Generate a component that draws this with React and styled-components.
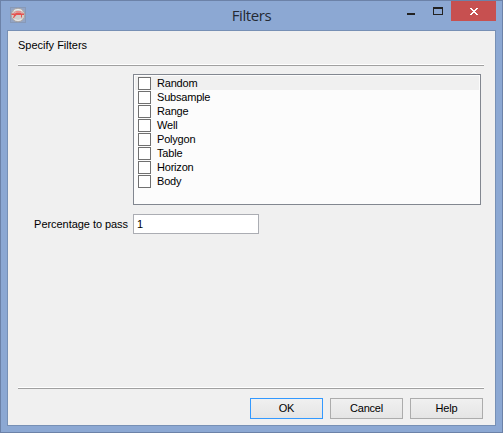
import React from "react";
import styled, { createGlobalStyle } from "styled-components";

const Global = createGlobalStyle`
  * { box-sizing: border-box; }
  body { margin: 0; overflow: hidden; }
`;

const Window = styled.div`
  width: 503px;
  height: 433px;
  display: flex;
  flex-direction: column;
  padding: 0 6px 6px;
  border: 1px solid #6c82a8;
  background: #8ca8d3;
  font: 11px/14px "Liberation Sans", Arial, sans-serif;
  color: #000;
`;

const TitleBar = styled.header`
  height: 29px;
  flex: none;
  display: grid;
  grid-template-columns: 98px 1fr 98px;
  align-items: start;
`;

const AppIcon = styled.svg`
  display: block;
  margin: 6px 0 0 3px;
`;

const Title = styled.h1`
  margin: 3px 0 0;
  text-align: center;
  font: 400 15px/23px "Open Sans", "Noto Sans", sans-serif;
  letter-spacing: -0.4px;
  color: #242a34;
`;

const WindowControls = styled.div`
  display: flex;
  justify-content: flex-end;
`;

const WindowButton = styled.button`
  width: ${(p) => p.$width}px;
  height: 20px;
  flex: none;
  padding: 0;
  border: 0;
  background: ${(p) => (p.$danger ? "#c75050" : "transparent")};

  svg { display: block; }
`;

const Client = styled.main`
  flex: 1;
  display: flex;
  flex-direction: column;
  padding: 7px 12px 6px 10px;
  border: 1px solid #7790b5;
  background: #f0f0f0;
`;

const Heading = styled.h2`
  height: 26px;
  margin: 0;
  font: inherit;
`;

const Divider = styled.div`
  flex: none;
  width: 466px;
  height: 2px;
  border-top: 1px solid #fff;
  border-bottom: 1px solid #a0a0a0;
`;

const FilterList = styled.ul`
  width: 348px;
  height: 131px;
  margin: 8px 0 0 115px;
  padding: 1px;
  list-style: none;
  border: 1px solid #828790;
  background: #fcfcfc;
`;

const FilterRow = styled.li`
  height: 14px;
  background: ${(p) => (p.$active ? "#f0f0f0" : "transparent")};
`;

const FilterLabel = styled.label`
  display: flex;
  height: 14px;
  padding: 1px 0 0 3px;
  gap: 6px;
  line-height: 13px;
  letter-spacing: -0.2px;
`;

const CheckBox = styled.input`
  appearance: none;
  flex: none;
  width: 13px;
  height: 13px;
  margin: 0;
  border: 1px solid #707070;
  background: #fff;
`;

const Field = styled.label`
  display: flex;
  align-items: center;
  gap: 5px;
  margin-top: 9px;
`;

const FieldLabel = styled.span`
  width: 110px;
  text-align: right;
  white-space: nowrap;
  letter-spacing: -0.05px;
`;

const TextInput = styled.input`
  width: 126px;
  height: 20px;
  padding: 0 3px;
  border: 1px solid #abadb3;
  border-radius: 0;
  background: #fff;
  font: inherit;
  color: #000;
  outline: 0;
`;

const Footer = styled.footer`
  margin-top: auto;
`;

const Actions = styled.div`
  display: flex;
  justify-content: flex-end;
  gap: 7px;
  padding-top: 9px;
`;

const ActionButton = styled.button`
  width: 73px;
  height: 21px;
  padding: 0 0 2px;
  border: 1px solid ${(p) => (p.$primary ? "#3399ff" : "#acacac")};
  background: linear-gradient(#f0f0f0, #e5e5e5);
  font: inherit;
  letter-spacing: -0.2px;
  color: #000;
`;

const filters = ["Random", "Subsample", "Range", "Well", "Polygon", "Table", "Horizon", "Body"];

export default function App() {
  return (
    <>
      <Global />
      <Window>
        <TitleBar>
          <AppIcon width="16" height="16" viewBox="0 0 16 16">
            <rect x=".5" y=".5" width="15" height="15" fill="#93a5c5" stroke="#8799b8" />
            <circle cx="8" cy="8" r="6.8" fill="#cfcecc" stroke="#aaa5a4" />
            <path d="M4 3.5Q8 1.2 12 3.5M4.5 12.5Q8 14.5 11.5 12.5" fill="none" stroke="#ececec" />
            <path d="M3.5 6.5 6 4.5h5l2 2" fill="none" stroke="#e98a86" />
            <path d="M1.5 6.5H5l1.5-1h4l1 1H14v1.5H6.5L5 9.5 4 11H3l1-3H1.5z" fill="#e65350" />
            <path d="M11.5 8v2.5" stroke="#e65350" />
          </AppIcon>
          <Title>Filters</Title>
          <WindowControls>
            <WindowButton $width={26} aria-label="Minimize">
              <svg width="26" height="20"><path d="M8 12h8v2H8z" fill="#222" /></svg>
            </WindowButton>
            <WindowButton $width={26} aria-label="Maximize">
              <svg width="26" height="20"><path d="M8 6h10v8H8zm1 2v5h8V8z" fillRule="evenodd" fill="#222" /></svg>
            </WindowButton>
            <WindowButton $width={45} $danger aria-label="Close">
              <svg width="45" height="20" shapeRendering="crispEdges">
                <path d="M19 7h2v1h1v1h2V8h1V7h2v1h-1v1h-1v1h-1v1h1v1h1v1h1v1h-2v-1h-1v-1h-2v1h-1v1h-2v-1h1v-1h1v-1h1v-1h-1V9h-1V8h-1z" fill="#fff" />
              </svg>
            </WindowButton>
          </WindowControls>
        </TitleBar>
        <Client>
          <Heading>Specify Filters</Heading>
          <Divider />
          <FilterList>
            {filters.map((name, i) => (
              <FilterRow key={name} $active={i === 0}>
                <FilterLabel>
                  <CheckBox type="checkbox" />
                  {name}
                </FilterLabel>
              </FilterRow>
            ))}
          </FilterList>
          <Field>
            <FieldLabel>Percentage to pass</FieldLabel>
            <TextInput defaultValue="1" />
          </Field>
          <Footer>
            <Divider />
            <Actions>
              <ActionButton $primary>OK</ActionButton>
              <ActionButton>Cancel</ActionButton>
              <ActionButton>Help</ActionButton>
            </Actions>
          </Footer>
        </Client>
      </Window>
    </>
  );
}
